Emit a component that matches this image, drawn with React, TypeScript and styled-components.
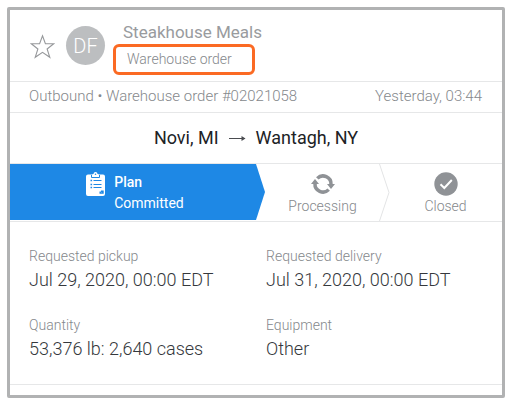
import React from 'react';
import styled, { createGlobalStyle } from 'styled-components';

const GlobalStyle = createGlobalStyle`
  * { box-sizing: border-box; }
  body {
    margin: 0;
    background: #fff;
    font-family: Roboto, sans-serif;
    font-weight: 300;
  }
`;

const Card = styled.main`
  margin: 7px 9px 7px 7px;
  padding-bottom: 10px;
  border: 3px solid #b1b2b3;
  border-radius: 2px;
  background: #fff;
`;

const Header = styled.header`
  display: flex;
  align-items: flex-start;
  height: 72px;
  padding: 12px 19px 0 20px;
  border-bottom: 1px solid #e6e7e8;
`;

const StarButton = styled.button`
  display: flex;
  margin: 12px 11px 0 0;
  padding: 0;
  border: 0;
  background: none;
`;

const Avatar = styled.div`
  display: flex;
  flex: none;
  align-items: center;
  justify-content: center;
  width: 39px;
  height: 39px;
  margin-top: 4px;
  border-radius: 50%;
  background: #bcbec0;
  color: #fff;
  font-size: 20px;
`;

const Titles = styled.div`
  margin-left: 8px;
`;

const Customer = styled.h1`
  margin: 0 0 2px 10px;
  color: #999b9e;
  font-size: 17px;
  font-weight: 400;
  line-height: 20px;
`;

const OrderType = styled.div`
  width: 142px;
  height: 31px;
  padding-left: 11px;
  border: 3px solid #fb6a23;
  border-radius: 6px;
  color: #85888c;
  font-size: 14px;
  line-height: 24px;
`;

const MetaRow = styled.div`
  display: flex;
  justify-content: space-between;
  height: 31px;
  padding: 0 20px 0 19px;
  border-bottom: 1px solid #e6e7e8;
  color: #85888c;
  font-size: 15px;
  line-height: 28px;
`;

const Route = styled.div`
  display: flex;
  align-items: center;
  justify-content: center;
  gap: 10px;
  height: 51px;
  padding-bottom: 2px;
  border-bottom: 1px solid #e6e7e8;
  color: #202225;
  font-size: 18px;
  font-weight: 400;
`;

const Steps = styled.ol`
  display: grid;
  grid-template-columns: 2fr 1fr 1fr;
  height: 58px;
  margin: 0;
  padding: 0;
  border-bottom: 1px solid #e6e7e8;
  list-style: none;
`;

const Step = styled.li<{ $active?: boolean }>`
  position: relative;
  display: flex;
  flex-direction: ${(p) => (p.$active ? 'row' : 'column')};
  align-items: ${(p) => (p.$active ? 'flex-start' : 'center')};
  justify-content: ${(p) => (p.$active ? 'center' : 'flex-start')};
  gap: ${(p) => (p.$active ? '9px' : '0')};
  height: ${(p) => (p.$active ? '56px' : '57px')};
  padding: 8px 0 0 ${(p) => (p.$active ? '4px' : '10px')};
  background: ${(p) => (p.$active ? '#1e88e5' : 'none')};
  color: ${(p) => (p.$active ? '#fff' : '#85888c')};
  font-size: 14px;
  line-height: 21px;
`;

const StepEdge = styled.svg`
  position: absolute;
  top: 0;
  left: 100%;
  z-index: 1;
`;

const StepText = styled.div<{ $strong?: boolean }>`
  font-weight: ${(p) => (p.$strong ? 500 : 300)};
`;

const ActiveText = styled.div`
  display: grid;
  font-weight: 400;
`;

const Details = styled.dl`
  display: grid;
  grid-template-columns: 1fr 1fr;
  gap: 21px 20px;
  margin: 0;
  padding: 24px 19px 21px;
  border-bottom: 1px solid #e6e7e8;
`;

const Label = styled.dt`
  color: #85888c;
  font-size: 14px;
  line-height: 20px;
`;

const Value = styled.dd`
  margin: 0;
  color: #35383c;
  font-size: 18px;
  line-height: 28px;
`;

const StarIcon = () => (
  <svg width="25" height="25" viewBox="0 0 25 25" fill="none" stroke="#96989b" strokeWidth="1.100" aria-hidden="true">
    <path d="M12.500 1.800l2.900 8h8.300l-6.600 5.200 2.700 8.300-7.300-5-7.300 5 2.700-8.300-6.600-5.200h8.300z" />
  </svg>
);

const ArrowIcon = () => (
  <svg width="17" height="10" viewBox="0 0 17 10" fill="none" stroke="#4a4c50" aria-label="to">
    <path d="M0 6.500h16" />
    <path d="M12.500 4l4 2.500-4 2.500z" fill="#4a4c50" stroke="none" />
  </svg>
);

const ClipboardIcon = () => (
  <svg width="19" height="24" viewBox="0 0 19 24" aria-hidden="true">
    <path fill="#fff" d="M2 2.500h4.500V2h1a2 2 0 0 1 4 0h1v.500H17a2 2 0 0 1 2 2V22a2 2 0 0 1-2 2H2a2 2 0 0 1-2-2V4.500a2 2 0 0 1 2-2z" />
    <path fill="none" stroke="#1e88e5" d="M5.500 3v2.500h8V3" />
    <circle cx="9.500" cy="2.300" r=".8" fill="#1e88e5" />
    <path fill="none" stroke="#1e88e5" d="M7.500 8.500H15.500M7.500 12.500H15.500M7.500 15.500H15.500" />
    <path fill="none" stroke="#1e88e5" strokeWidth="1.600" d="M4.500 8.500h1.600M4.500 12.500h1.600M4.500 15.500h1.600" />
    <path fill="none" stroke="#1e88e5" strokeWidth="1.400" d="M14.200 19.500v1.500h2.500M15 19.300h2v2.500M17 19l-1 1" />
  </svg>
);

const RefreshIcon = () => (
  <svg width="24" height="24" viewBox="0 0 24 24" fill="none" stroke="#8f9296" strokeWidth="3.500" aria-hidden="true">
    <path d="M6.300 6.400A8 8 0 0 1 20 12.500M17.700 17.600A8 8 0 0 1 4 11.500" />
    <path fill="#8f9296" stroke="none" d="M16 12h8l-4 5zM0 12h8L4 7z" />
  </svg>
);

const CheckIcon = () => (
  <svg width="24" height="24" viewBox="0 0 24 24" aria-hidden="true">
    <circle cx="12" cy="12" r="11.700" fill="#8f9296" />
    <path d="M6.500 12.300l3.800 3.700 7.500-8" fill="none" stroke="#fff" strokeWidth="2" />
  </svg>
);

const details = [
  { label: 'Requested pickup', value: 'Jul 29, 2020, 00:00 EDT' },
  { label: 'Requested delivery', value: 'Jul 31, 2020, 00:00 EDT' },
  { label: 'Quantity', value: '53,376 lb: 2,640 cases' },
  { label: 'Equipment', value: 'Other' },
];

export default function App() {
  return (
    <>
      <GlobalStyle />
      <Card>
        <Header>
          <StarButton type="button" aria-label="Add to favorites">
            <StarIcon />
          </StarButton>
          <Avatar>DF</Avatar>
          <Titles>
            <Customer>Steakhouse Meals</Customer>
            <OrderType>Warehouse order</OrderType>
          </Titles>
        </Header>
        <MetaRow>
          <span>Outbound • Warehouse order #02021058</span>
          <time>Yesterday, 03:44</time>
        </MetaRow>
        <Route>
          <span>Novi, MI</span>
          <ArrowIcon />
          <span>Wantagh, NY</span>
        </Route>
        <Steps>
          <Step $active aria-current="step">
            <ClipboardIcon />
            <ActiveText>
              <StepText $strong>Plan</StepText>
              <span>Committed</span>
            </ActiveText>
            <StepEdge width="10" height="56" viewBox="0 0 10 56" aria-hidden="true">
              <path d="M0 0l9 28-9 28z" fill="#1e88e5" />
            </StepEdge>
          </Step>
          <Step>
            <RefreshIcon />
            <StepText>Processing</StepText>
            <StepEdge width="11" height="57" viewBox="0 0 11 57" aria-hidden="true">
              <path d="M.5 0l9.500 28.500L.5 57" fill="none" stroke="#e3e4e5" />
            </StepEdge>
          </Step>
          <Step>
            <CheckIcon />
            <StepText>Closed</StepText>
          </Step>
        </Steps>
        <Details>
          {details.map((item) => (
            <div key={item.label}>
              <Label>{item.label}</Label>
              <Value>{item.value}</Value>
            </div>
          ))}
        </Details>
      </Card>
    </>
  );
}
